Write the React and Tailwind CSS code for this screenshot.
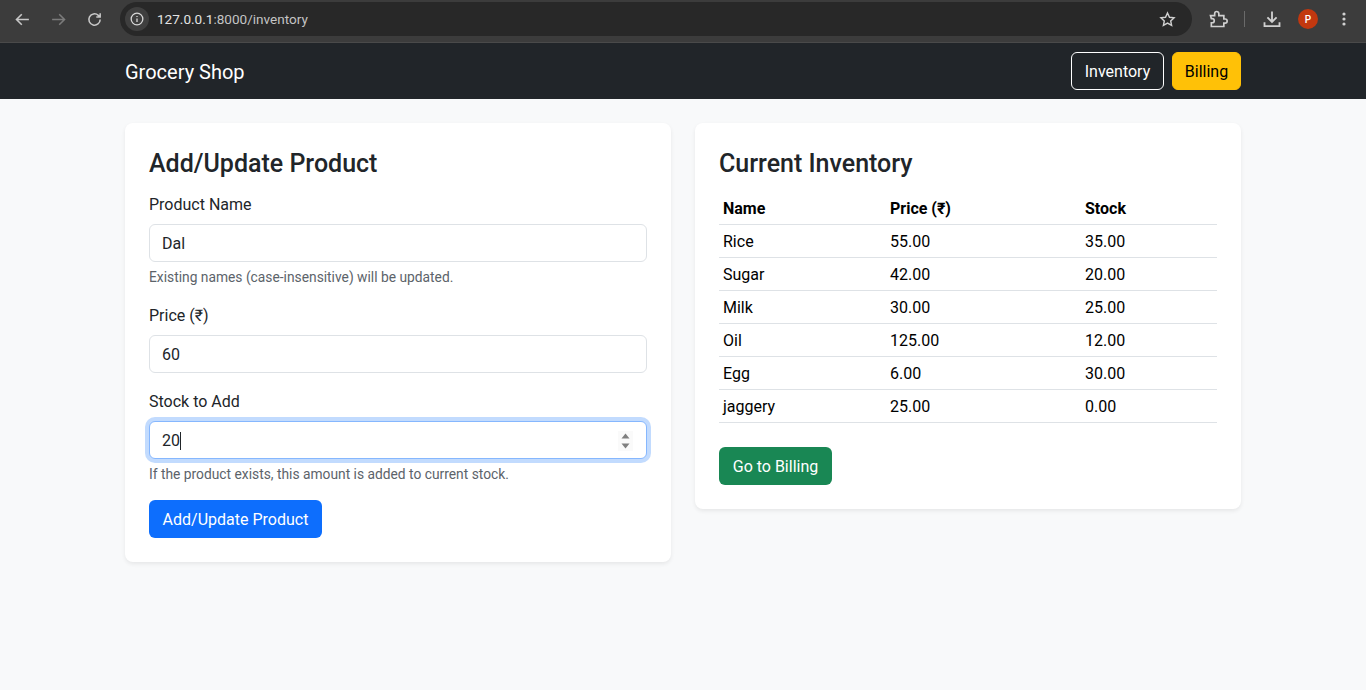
import React from "react";
function Field({ label, value, help, focus, mb }) {
  return (
    <div className={mb}>
      <label className="block text-[16px] leading-[24px] mb-[7px] text-[#212529]">{label}</label>
      <div className={`relative h-[38px] rounded-[6px] bg-white border ${focus ? "border-[#86b7fe] ring-4 ring-[#0d6efd]/25" : "border-[#dee2e6]"}`}>
        <input readOnly value={value} className="w-full h-full px-3 text-[16px] text-[#212529] bg-transparent outline-none" />
        {focus && <span className="absolute left-[30px] top-[10px] w-px h-[18px] bg-[#212529]" />}
        {focus && (
          <svg className="absolute right-[13px] top-[9px]" width="15" height="20" viewBox="0 0 15 20">
            <rect width="15" height="20" fill="#fafafa" />
            <path d="M3.5 7.5 L7.5 2.5 L11.5 7.5 Z M3.5 12.5 L7.5 17.5 L11.5 12.5 Z" fill="#808080" />
          </svg>
        )}
      </div>
      {help && <div className="mt-[5px] text-[13.8px] leading-[21px] text-[#5c636a]">{help}</div>}
    </div>
  );
}
const rows = [["Rice","55.00","35.00"],["Sugar","42.00","20.00"],["Milk","30.00","25.00"],["Oil","125.00","12.00"],["Egg","6.00","30.00"],["jaggery","25.00","0.00"]];
export default function App() {
  return (
    <div className="min-h-[690px] bg-[#f8f9fa] text-[#212529] overflow-hidden" style={{ fontFamily: 'Roboto, "Noto Sans", sans-serif' }}>
      <div className="h-[43px] bg-[#3c3c3c] border-b border-[#4a4a4a] flex items-center pb-[4px]">
        <div className="flex items-center w-[120px] pl-[14px] gap-[19px]">
          <svg width="17" height="17" viewBox="0 0 24 24" fill="none" stroke="#c7c7c7" strokeWidth="2.2"><path d="M21 12H4M11 4.5 3.5 12l7.5 7.5" /></svg>
          <svg width="17" height="17" viewBox="0 0 24 24" fill="none" stroke="#7b7b7b" strokeWidth="2.2"><path d="M3 12h17M13 4.5l7.5 7.5-7.5 7.5" /></svg>
          <svg width="17" height="17" viewBox="0 0 24 24" fill="none" stroke="#c7c7c7" strokeWidth="2.2"><path d="M20 12a8 8 0 1 1-2.6-5.9L20 8.5M20 3v5.5h-5.5" /></svg>
        </div>
        <div className="w-[1072px] h-[34px] rounded-full bg-[#282828] flex items-center pl-[5px] pr-[16px]">
          <div className="w-6 h-6 rounded-full bg-[#3f3f3f] flex items-center justify-center">
            <svg width="14" height="14" viewBox="0 0 24 24" fill="none" stroke="#d8d8d8" strokeWidth="2.2"><circle cx="12" cy="12" r="10" /><path d="M12 11v6M12 7v1.5" /></svg>
          </div>
          <span className="ml-2 text-[13.55px] text-[#e3e3e3] flex-1">127.0.0.1<span className="text-[#c4c4c4]">:8000/inventory</span></span>
          <svg width="17" height="17" viewBox="0 0 24 24" fill="none" stroke="#d0d0d0" strokeWidth="2"><path d="m12 2.8 2.8 6 6.5.8-4.8 4.4 1.3 6.4-5.8-3.2-5.8 3.2 1.3-6.4L2.7 9.6l6.5-.8z" /></svg>
        </div>
        <div className="flex items-center flex-1 pl-[16px]">
          <svg width="20" height="20" viewBox="0 0 24 24" fill="none" stroke="#d0d0d0" strokeWidth="2"><path d="M3 8h5V5.5a2.5 2.5 0 0 1 5 0V8h6v4h1.5a2.5 2.5 0 0 1 0 5H19v4H4v-4.5h1a2.5 2.5 0 0 0 0-5H4z" /></svg>
          <span className="ml-4 w-px h-4 bg-[#6a6a6a]" />
          <svg className="ml-[17px]" width="20" height="20" viewBox="0 0 24 24" fill="none" stroke="#d0d0d0" strokeWidth="2.2"><path d="M12 3v12M6.5 10l5.5 5.5 5.5-5.5M3 16v4.5h18V16" /></svg>
          <span className="ml-[16px] w-5 h-5 rounded-full bg-[#c2380f] text-white text-[10px] font-medium flex items-center justify-center">P</span>
          <svg className="ml-[24px]" width="4" height="14" viewBox="0 0 4 14" fill="#d0d0d0"><circle cx="2" cy="2" r="1.6" /><circle cx="2" cy="7" r="1.6" /><circle cx="2" cy="12" r="1.6" /></svg>
        </div>
      </div>
      <nav className="h-[56px] bg-[#212529] flex items-center justify-between px-[125px]">
        <span className="text-white text-[20px] pt-[2px]">Grocery Shop</span>
        <div className="flex gap-2">
          <span className="h-[38px] w-[93px] pt-[2px] flex items-center justify-center rounded-[6px] border border-white text-white text-[16px]">Inventory</span>
          <span className="h-[38px] w-[69px] pt-[2px] flex items-center justify-center rounded-[6px] border border-[#ffc107] bg-[#ffc107] text-black text-[16px]">Billing</span>
        </div>
      </nav>
      <main className="grid grid-cols-2 gap-6 px-[125px] pt-6 items-start">
        <section className="bg-white rounded-[8px] shadow-[0_2px_4px_rgba(0,0,0,0.075)] p-6">
          <h2 className="text-[25px] leading-[29px] font-medium mt-[2px] mb-[15px]">Add/Update Product</h2>
          <Field label="Product Name" value="Dal" help="Existing names (case-insensitive) will be updated." mb="mb-4" />
          <Field label="Price (₹)" value="60" mb="mb-[17px]" />
          <Field label="Stock to Add" value="20" focus help="If the product exists, this amount is added to current stock." mb="mb-[15px]" />
          <button className="h-[38px] w-[173px] pt-[2px] rounded-[6px] bg-[#0d6efd] text-white text-[16px]">Add/Update Product</button>
        </section>
        <section className="bg-white rounded-[8px] shadow-[0_2px_4px_rgba(0,0,0,0.075)] p-6">
          <h2 className="text-[25px] leading-[29px] font-medium mt-[2px] mb-[14px]">Current Inventory</h2>
          <table className="w-full table-fixed text-[16px] mb-6">
            <thead>
              <tr className="border-b border-[#dee2e6] text-black font-bold text-left">
                <th className="w-[167px] h-[32px] pt-[2px] px-1 font-bold">Name</th>
                <th className="w-[195px] pt-[2px] px-1 font-bold">Price (₹)</th>
                <th className="pt-[2px] px-1 font-bold">Stock</th>
              </tr>
            </thead>
            <tbody>
              {rows.map((r) => (
                <tr key={r[0]} className="border-b border-[#dee2e6] text-black">
                  {r.map((c, i) => <td key={i} className="h-[33px] pt-[2px] px-1">{c}</td>)}
                </tr>
              ))}
            </tbody>
          </table>
          <button className="h-[38px] w-[113px] pt-[2px] rounded-[6px] bg-[#198754] text-white text-[16px]">Go to Billing</button>
        </section>
      </main>
    </div>
  );
}
